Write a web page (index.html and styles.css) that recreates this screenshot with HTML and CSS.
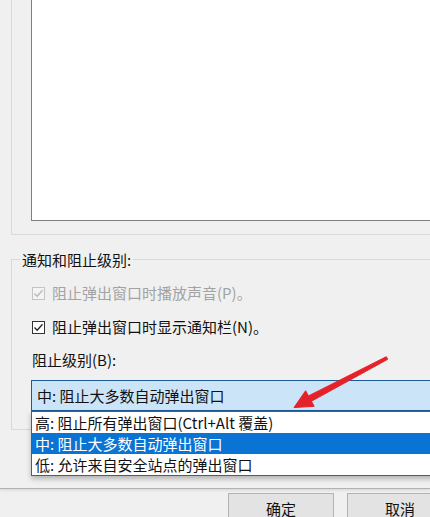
FILE: index.html
```html
<!DOCTYPE html>
<html lang="zh-CN">
<head>
<meta charset="utf-8">
<title>弹出窗口阻止程序设置</title>
<link rel="stylesheet" href="styles.css">
</head>
<body>
<div class="page">
  <div class="panel">
    <div class="top-group">
      <div class="listbox"></div>
    </div>
    <div class="notify">
      <div class="legend">通知和阻止级别:</div>
      <div class="check disabled">
        <svg class="box" viewBox="0 0 13 13" width="13" height="13"><rect x="0.5" y="0.5" width="12" height="12"/><polyline points="2.5,6.5 5.2,9.3 10.5,3.3"/></svg>
        <span>阻止弹出窗口时播放声音(P)。</span>
      </div>
      <div class="check">
        <svg class="box" viewBox="0 0 13 13" width="13" height="13"><rect x="0.5" y="0.5" width="12" height="12"/><polyline points="2.5,6.5 5.2,9.3 10.5,3.3"/></svg>
        <span>阻止弹出窗口时显示通知栏(N)。</span>
      </div>
      <div class="field-label">阻止级别(B):</div>
      <div class="combo-wrap">
        <div class="combo">中: 阻止大多数自动弹出窗口</div>
        <ul class="dropdown">
          <li>高: 阻止所有弹出窗口(Ctrl+Alt 覆盖)</li>
          <li class="selected">中: 阻止大多数自动弹出窗口</li>
          <li>低: 允许来自安全站点的弹出窗口</li>
        </ul>
      </div>
    </div>
  </div>
  <div class="buttons">
    <button class="btn">确定</button>
    <button class="btn">取消</button>
  </div>
  <svg class="arrow" viewBox="0 0 430 517" width="430" height="517">
    <polygon points="387.7,359.3 386.3,356.7 308.5,395.9 311.3,401.3"/>
    <polygon points="294,407.5 305.6,390.8 314.2,406.3"/>
  </svg>
</div>
</body>
</html>
```
FILE: styles.css
```css
html, body {
  margin: 0;
  padding: 0;
}
body {
  background: #f0f0f0;
  font-family: "Noto Sans CJK SC", "Noto Sans", sans-serif;
  font-size: 15px;
  color: #111;
}
.page {
  position: relative;
  width: 430px;
  height: 517px;
  overflow: hidden;
}
.panel {
  padding-bottom: 58px;
  border-bottom: 1px solid #b2b2b2;
  box-shadow: 0 1px 3px rgba(0, 0, 0, 0.12);
}
.top-group {
  margin-left: 11px;
  width: 460px;
  height: 235px;
  box-sizing: border-box;
  border-left: 1px solid #d9d9d9;
  border-bottom: 1px solid #d9d9d9;
}
.listbox {
  margin-left: 19px;
  height: 221px;
  box-sizing: border-box;
  background: #fff;
  border-left: 1px solid #7f7f7f;
  border-bottom: 1px solid #7f7f7f;
}
.notify {
  margin-top: 24px;
  margin-left: 11px;
  width: 460px;
  padding: 0 0 18px 20px;
  border: 1px solid #d9d9d9;
  border-right: none;
}
.legend {
  margin-top: -10px;
  margin-left: -12px;
  padding: 0 2px;
  width: fit-content;
  background: #f0f0f0;
  line-height: 20px;
}
.check {
  display: flex;
  align-items: center;
  gap: 7px;
  height: 20px;
  margin-top: 13px;
  line-height: 20px;
}
.check + .check {
  margin-top: 14px;
}
.box rect {
  fill: #fff;
  stroke: #333;
  stroke-width: 1;
}
.box polyline {
  fill: none;
  stroke: #222;
  stroke-width: 1.3;
}
.check.disabled {
  color: #a3a3a3;
}
.check.disabled .box rect {
  fill: #f4f4f4;
  stroke: #c4c4c4;
}
.check.disabled .box polyline {
  stroke: #b8b8b8;
}
.field-label {
  margin-top: 13px;
  line-height: 20px;
}
.combo-wrap {
  position: relative;
  margin-top: 10px;
  margin-left: -1px;
}
.combo {
  height: 31px;
  box-sizing: border-box;
  width: 430px;
  padding-left: 5px;
  line-height: 29px;
  background: #cce4f7;
  border: 1px solid #1d5a98;
}
.dropdown {
  position: absolute;
  top: 31px;
  left: 0;
  width: 430px;
  margin: 0;
  padding: 0;
  list-style: none;
  background: #fff;
  border: 1px solid #2566a8;
  box-shadow: 0 3px 5px rgba(0, 0, 0, 0.25);
}
.dropdown li {
  height: 21px;
  line-height: 21px;
  padding-left: 3px;
  white-space: nowrap;
}
.dropdown li.selected {
  background: #0a74d4;
  color: #fff;
}
.buttons {
  display: flex;
  gap: 13px;
  margin-top: 4px;
  padding-left: 228px;
}
.btn {
  flex-shrink: 0;
  width: 106px;
  height: 30px;
  background: #e3e3e3;
  border: 1px solid #b3b3b3;
  font-family: inherit;
  font-size: 15px;
  color: #111;
  padding: 0;
}
.arrow {
  position: absolute;
  left: 0;
  top: 0;
  pointer-events: none;
}
.arrow polygon {
  fill: #e52129;
  stroke: #e52129;
  stroke-width: 1;
  stroke-linejoin: round;
}
```
